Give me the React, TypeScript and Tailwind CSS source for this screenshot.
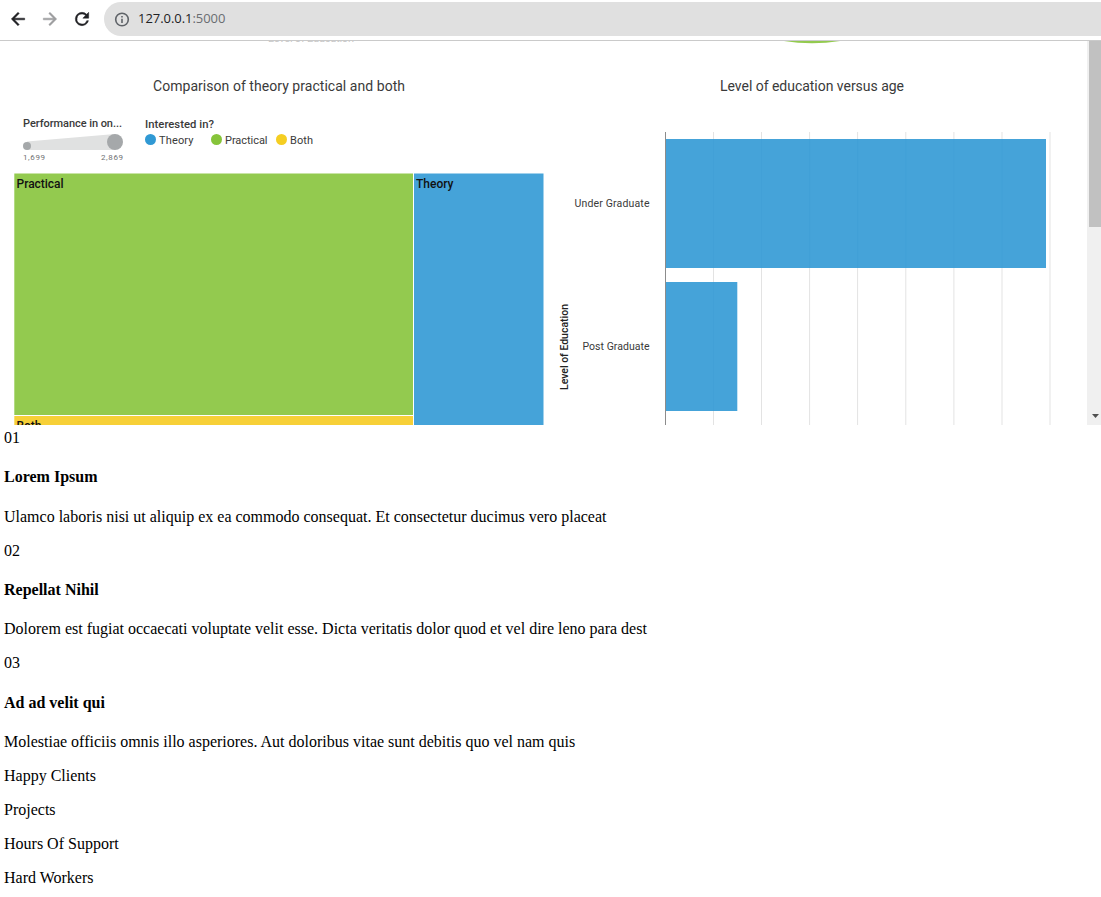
import React from 'react';

const BLUE = '#45a3d9';
const GREEN = '#93ca4f';
const YELLOW = '#f7d038';

const BACK = 'M20 11H7.83l5.590-5.590L12 4l-8 8 8 8 1.410-1.410L7.830 13H20v-2z';
const FORWARD = 'M12 4l-1.410 1.410L16.170 11H4v2h12.170l-5.580 5.590L12 20l8-8z';
const RELOAD =
  'M17.65 6.35A7.96 7.96 0 0 0 12 4a8 8 0 1 0 7.73 10h-2.08A6 6 0 1 1 12 6c1.660 0 3.140.690 4.220 1.780L13 11h7V4l-2.350 2.350z';

function NavIcon({ d, color }: { d: string; color: string }) {
  return (
    <svg width="20" height="20" viewBox="0 0 24 24" fill={color} stroke={color} strokeWidth="0.6">
      <path d={d} />
    </svg>
  );
}

function BrowserBar() {
  return (
    <header className="flex h-[41px] shrink-0 items-start border-b border-[#cacaca] bg-white pt-[2px] pl-[8px]">
      <nav className="flex h-[34px] items-center gap-[12px]">
        <NavIcon d={BACK} color="#202124" />
        <NavIcon d={FORWARD} color="#9c9d9f" />
        <NavIcon d={RELOAD} color="#202124" />
      </nav>
      <div className="ml-[12px] flex h-[34px] flex-1 items-center rounded-l-full bg-[#e0e0e0] pl-[9px]">
        <svg width="17" height="17" viewBox="0 0 17 17" fill="none" stroke="#5f6368" strokeWidth="1.6">
          <circle cx="9" cy="8.500" r="6.300" />
          <path d="M9 7.700V12M9 4.900V6.500" />
        </svg>
        <span className="ml-[8px] font-['Open_Sans',sans-serif] text-[13px] tracking-[-0.05px] text-[#202124]">
          127.0.0.1<span className="text-[#6a6d71]">:5000</span>
        </span>
      </div>
    </header>
  );
}

function TreemapChart() {
  return (
    <svg width="555" height="384" viewBox="0 41 555 384" className="block shrink-0 font-['Roboto',sans-serif]" fill="#3a3a3a">
      <text x="268" y="42" fontSize="11" textLength="86" fill="#c8c8c8">Level of Education</text>
      <text x="153" y="91" fontSize="14" textLength="252">Comparison of theory practical and both</text>
      <text x="23" y="127" fontSize="11" fontWeight="500" textLength="99">Performance in on...</text>
      <path d="M27 141.500 L115 134 V150 H27 Z" fill="#e0e1e1" />
      <circle cx="27" cy="146" r="4" fill="#a5a8aa" />
      <circle cx="115" cy="142" r="8" fill="#a5a8aa" />
      <text x="23" y="160" fontSize="8" textLength="22" fill="#6f7072">1,699</text>
      <text x="101" y="160" fontSize="8" textLength="22" fill="#6f7072">2,869</text>
      <text x="145" y="128" fontSize="11.300" fontWeight="500" textLength="69">Interested in?</text>
      <circle cx="150.500" cy="139.500" r="5.500" fill="#3099d4" />
      <text x="159" y="144" fontSize="11" textLength="34.500">Theory</text>
      <circle cx="216.500" cy="139.500" r="5.500" fill="#86c43a" />
      <text x="225" y="144" fontSize="11" textLength="42.500">Practical</text>
      <circle cx="281.500" cy="139.500" r="5.500" fill="#f5ce22" />
      <text x="290" y="144" fontSize="11" textLength="23">Both</text>
      <rect x="14.300" y="173.500" width="398.700" height="241.500" fill={GREEN} />
      <rect x="14.300" y="416" width="398.700" height="9" fill={YELLOW} />
      <rect x="414" y="173.500" width="129.500" height="251.500" fill={BLUE} />
      <g fontSize="12" fontWeight="500" fill="#111">
        <text x="16.500" y="188" textLength="47">Practical</text>
        <text x="416" y="188" textLength="37.500">Theory</text>
        <text x="16.500" y="430" textLength="25">Both</text>
      </g>
    </svg>
  );
}

function EducationChart() {
  return (
    <svg width="532" height="384" viewBox="555 41 532 384" className="block shrink-0 font-['Roboto',sans-serif]" fill="#3a3a3a">
      <circle cx="812" cy="-137" r="180.200" fill={GREEN} />
      <text x="720" y="91" fontSize="14" textLength="184">Level of education versus age</text>
      {[713.5, 761.5, 809.6, 857.6, 905.8, 953.9, 1002, 1050].map((x) => (
        <path key={x} d={`M${x} 132V425`} stroke="#e3e3e3" />
      ))}
      <rect x="665" y="139" width="381" height="129" fill={BLUE} />
      <rect x="665" y="282" width="72.300" height="129" fill={BLUE} />
      <path
        d="M713.500 139V268M761.500 139V268M809.600 139V268M857.600 139V268M905.800 139V268M953.900 139V268M1002 139V268M713.500 282V411"
        stroke="#42a0d7"
      />
      <path d="M665.500 132V425" stroke="#8c8c8c" />
      <text x="574.500" y="207" fontSize="10.500" textLength="75">Under Graduate</text>
      <text x="582.500" y="350" fontSize="10.500" textLength="67">Post Graduate</text>
      <text transform="translate(568 390) rotate(-90)" fontSize="10.500" fontWeight="500" fill="#222" textLength="86">Level of Education</text>
    </svg>
  );
}

function Scrollbar() {
  return (
    <div className="flex w-[14px] flex-col justify-between bg-[#f0f0f0] pl-[2px]">
      <div className="h-[186px] bg-[#c1c1c1]" />
      <svg width="12" height="18" viewBox="0 0 12 18" fill="#505050">
        <path d="M3 7H10L6.500 11Z" />
      </svg>
    </div>
  );
}

const entries = [
  { no: '01', title: 'Lorem Ipsum', text: 'Ulamco laboris nisi ut aliquip ex ea commodo consequat. Et consectetur ducimus vero placeat' },
  { no: '02', title: 'Repellat Nihil', text: 'Dolorem est fugiat occaecati voluptate velit esse. Dicta veritatis dolor quod et vel dire leno para dest' },
  { no: '03', title: 'Ad ad velit qui', text: 'Molestiae officiis omnis illo asperiores. Aut doloribus vitae sunt debitis quo vel nam quis' },
];
const stats = ['Happy Clients', 'Projects', 'Hours Of Support', 'Hard Workers'];

export default function App() {
  return (
    <div className="flex h-[897px] w-[1101px] flex-col overflow-hidden bg-white">
      <BrowserBar />
      <section className="flex h-[384px] shrink-0 overflow-hidden">
        <TreemapChart />
        <EducationChart />
        <Scrollbar />
      </section>
      <main className="flex flex-col pt-[4px] pl-[4px] font-['Liberation_Serif',serif] text-[16px] leading-[18px] text-black">
        {entries.map((e) => (
          <article key={e.no} className="flex h-[112.7px] shrink-0 flex-col">
            <span>{e.no}</span>
            <h4 className="mt-[21.4px] font-bold">{e.title}</h4>
            <p className="mt-[21.4px] whitespace-nowrap">{e.text}</p>
          </article>
        ))}
        <ul className="flex flex-col gap-[16px]">
          {stats.map((s) => (
            <li key={s}>{s}</li>
          ))}
        </ul>
      </main>
    </div>
  );
}
